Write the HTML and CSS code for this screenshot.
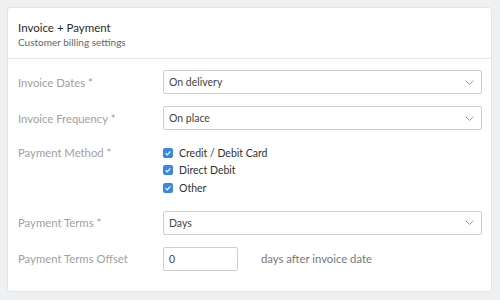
FILE: index.html
```html
<!DOCTYPE html>
<html lang="en">
<head>
  <meta charset="UTF-8">
  <title>Invoice + Payment</title>
  <link rel="stylesheet" href="styles.css">
</head>
<body>
  <div class="card">
    <div class="card-head">
      <h2>Invoice + Payment</h2>
      <p>Customer billing settings</p>
    </div>
    <form class="card-body">
      <label class="field-label">Invoice Dates *</label>
      <div class="select">
        <span>On delivery</span>
        <svg width="9" height="5" viewBox="0 0 9 5"><path d="M0.5 0.5l4 4 4-4" fill="none" stroke="#999" stroke-width="1"/></svg>
      </div>

      <label class="field-label">Invoice Frequency *</label>
      <div class="select">
        <span>On place</span>
        <svg width="9" height="5" viewBox="0 0 9 5"><path d="M0.5 0.5l4 4 4-4" fill="none" stroke="#999" stroke-width="1"/></svg>
      </div>

      <label class="field-label top">Payment Method *</label>
      <div class="checks">
        <label class="check"><span class="box"><svg width="8" height="8" viewBox="0 0 8 8"><path d="M1.6 4.2l1.6 1.7 3.2-3.6" fill="none" stroke="#fff" stroke-width="1.2"/></svg></span>Credit / Debit Card</label>
        <label class="check"><span class="box"><svg width="8" height="8" viewBox="0 0 8 8"><path d="M1.6 4.2l1.6 1.7 3.2-3.6" fill="none" stroke="#fff" stroke-width="1.2"/></svg></span>Direct Debit</label>
        <label class="check"><span class="box"><svg width="8" height="8" viewBox="0 0 8 8"><path d="M1.6 4.2l1.6 1.7 3.2-3.6" fill="none" stroke="#fff" stroke-width="1.2"/></svg></span>Other</label>
      </div>

      <label class="field-label">Payment Terms *</label>
      <div class="select">
        <span>Days</span>
        <svg width="9" height="5" viewBox="0 0 9 5"><path d="M0.5 0.5l4 4 4-4" fill="none" stroke="#999" stroke-width="1"/></svg>
      </div>

      <label class="field-label">Payment Terms Offset</label>
      <div class="offset">
        <div class="input">0</div>
        <span class="hint">days after invoice date</span>
      </div>
    </form>
  </div>
</body>
</html>
```

FILE: styles.css
```css
body {
  margin: 0;
  padding: 7px 8px 8px 7px;
  background: #eef0f2;
  font-family: Lato, "Open Sans", sans-serif;
}
.card {
  background: #fff;
  border: 1px solid #e2e4e6;
  border-radius: 3px;
  height: 285px;
  box-sizing: border-box;
}
.card-head {
  padding: 12px 10px 9px;
  border-bottom: 1px solid #e8e9eb;
}
.card-head h2 {
  margin: 0;
  font-size: 11.5px;
  font-weight: 400;
  color: #2a2a2a;
  line-height: 15px;
}
.card-head p {
  margin: 0;
  font-size: 10px;
  color: #666;
  line-height: 14px;
}
.card-body {
  display: grid;
  grid-template-columns: 145px 1fr;
  row-gap: 12px;
  align-items: center;
  padding: 11px 9px 0 10px;
}
.field-label {
  font-size: 11.3px;
  color: #a0a0a0;
}
.field-label.top {
  align-self: start;
  line-height: 17px;
  margin-top: 2px;
}
.select, .input {
  height: 24px;
  box-sizing: border-box;
  border: 1px solid #cfcfcf;
  border-radius: 2px;
  padding: 0 7px 0 5px;
  display: flex;
  align-items: center;
  font-size: 10.5px;
  color: #444;
}
.select span {
  flex: 1;
}
.checks {
  display: flex;
  flex-direction: column;
  margin: 2px 0 2px;
}
.check {
  display: flex;
  align-items: center;
  gap: 6px;
  height: 17.5px;
  font-size: 10.5px;
  color: #333;
}
.box {
  width: 10px;
  height: 10px;
  border-radius: 2px;
  background: #3b87e8;
  display: flex;
  align-items: center;
  justify-content: center;
}
.offset {
  display: flex;
  align-items: center;
  gap: 23px;
}
.input {
  width: 75px;
}
.hint {
  font-size: 11.3px;
  color: #777;
}
```
